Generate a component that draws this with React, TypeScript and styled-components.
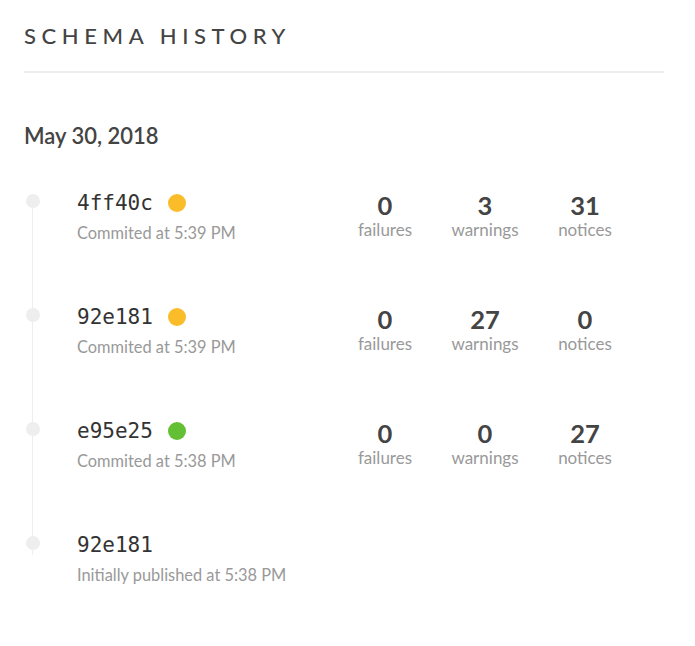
import React from "react";
import styled, { createGlobalStyle } from "styled-components";

const Global = createGlobalStyle`
  html, body { margin: 0; padding: 0; background: #fff; }
  body { font-family: Lato, "Open Sans", sans-serif; color: #444; }
`;

const Page = styled.div`
  padding: 22px 31px 0 24px;
`;

const Header = styled.div`
  border-bottom: 2px solid #ededed;
  padding-bottom: 21px;
`;

const Title = styled.h1`
  margin: 0;
  font-size: 22px;
  line-height: 28px;
  font-weight: 500;
  letter-spacing: 5.6px;
  color: #444;
`;

const DateHead = styled.h2`
  margin: 49px 0 0;
  font-size: 22px;
  line-height: 28px;
  font-weight: 600;
  color: #444;
`;

const List = styled.div`
  margin-top: 44px;
  display: flex;
  flex-direction: column;
`;

const Row = styled.div<{ $last?: boolean }>`
  display: flex;
  height: ${(p) => (p.$last ? "80px" : "114px")};
`;

const Marker = styled.div`
  width: 53px;
  flex: none;
  display: flex;
  flex-direction: column;
  align-items: flex-start;
`;

const Dot = styled.div`
  width: 14px;
  height: 14px;
  border-radius: 50%;
  background: #eeeeee;
  margin-left: 1.5px;
  flex: none;
`;

const Line = styled.div<{ $last?: boolean }>`
  width: 1px;
  background: #eeeeee;
  margin-left: 8px;
  ${(p) => (p.$last ? "height: 5px;" : "flex: 1;")}
`;

const Info = styled.div`
  width: 258px;
  flex: none;
  margin-top: -2px;
`;

const HashLine = styled.div`
  display: flex;
  align-items: center;
  gap: 15px;
  height: 22px;
`;

const Hash = styled.span`
  font-family: "DejaVu Sans Mono", "Liberation Mono", monospace;
  font-size: 21px;
  color: #333;
`;

const Status = styled.span<{ $color: string }>`
  width: 18px;
  height: 18px;
  border-radius: 50%;
  background: ${(p) => p.$color};
  margin-top: -1px;
`;

const Sub = styled.div`
  margin-top: 8px;
  font-size: 16.4px;
  line-height: 22px;
  color: #999;
`;

const Stats = styled.div`
  display: flex;
  margin-top: -3px;
`;

const Stat = styled.div`
  width: 100px;
  display: flex;
  flex-direction: column;
  align-items: center;
`;

const Num = styled.div`
  font-size: 25.5px;
  line-height: 29px;
  font-weight: 700;
  color: #444;
`;

const Label = styled.div`
  font-size: 17px;
  line-height: 20px;
  color: #999;
`;

type Entry = {
  hash: string;
  sub: string;
  status?: string;
  stats?: [number, number, number];
};

const YELLOW = "#fbbc2a";
const GREEN = "#63bf33";

const entries: Entry[] = [
  { hash: "4ff40c", sub: "Commited at 5:39 PM", status: YELLOW, stats: [0, 3, 31] },
  { hash: "92e181", sub: "Commited at 5:39 PM", status: YELLOW, stats: [0, 27, 0] },
  { hash: "e95e25", sub: "Commited at 5:38 PM", status: GREEN, stats: [0, 0, 27] },
  { hash: "92e181", sub: "Initially published at 5:38 PM" },
];

const labels = ["failures", "warnings", "notices"];

export default function App() {
  return (
    <Page>
      <Global />
      <Header>
        <Title>SCHEMA HISTORY</Title>
      </Header>
      <DateHead>May 30, 2018</DateHead>
      <List>
        {entries.map((e, i) => {
          const last = i === entries.length - 1;
          return (
            <Row key={i} $last={last}>
              <Marker>
                <Dot />
                <Line $last={last} />
              </Marker>
              <Info>
                <HashLine>
                  <Hash>{e.hash}</Hash>
                  {e.status && <Status $color={e.status} />}
                </HashLine>
                <Sub>{e.sub}</Sub>
              </Info>
              {e.stats && (
                <Stats>
                  {e.stats.map((n, j) => (
                    <Stat key={j}>
                      <Num>{n}</Num>
                      <Label>{labels[j]}</Label>
                    </Stat>
                  ))}
                </Stats>
              )}
            </Row>
          );
        })}
      </List>
    </Page>
  );
}
